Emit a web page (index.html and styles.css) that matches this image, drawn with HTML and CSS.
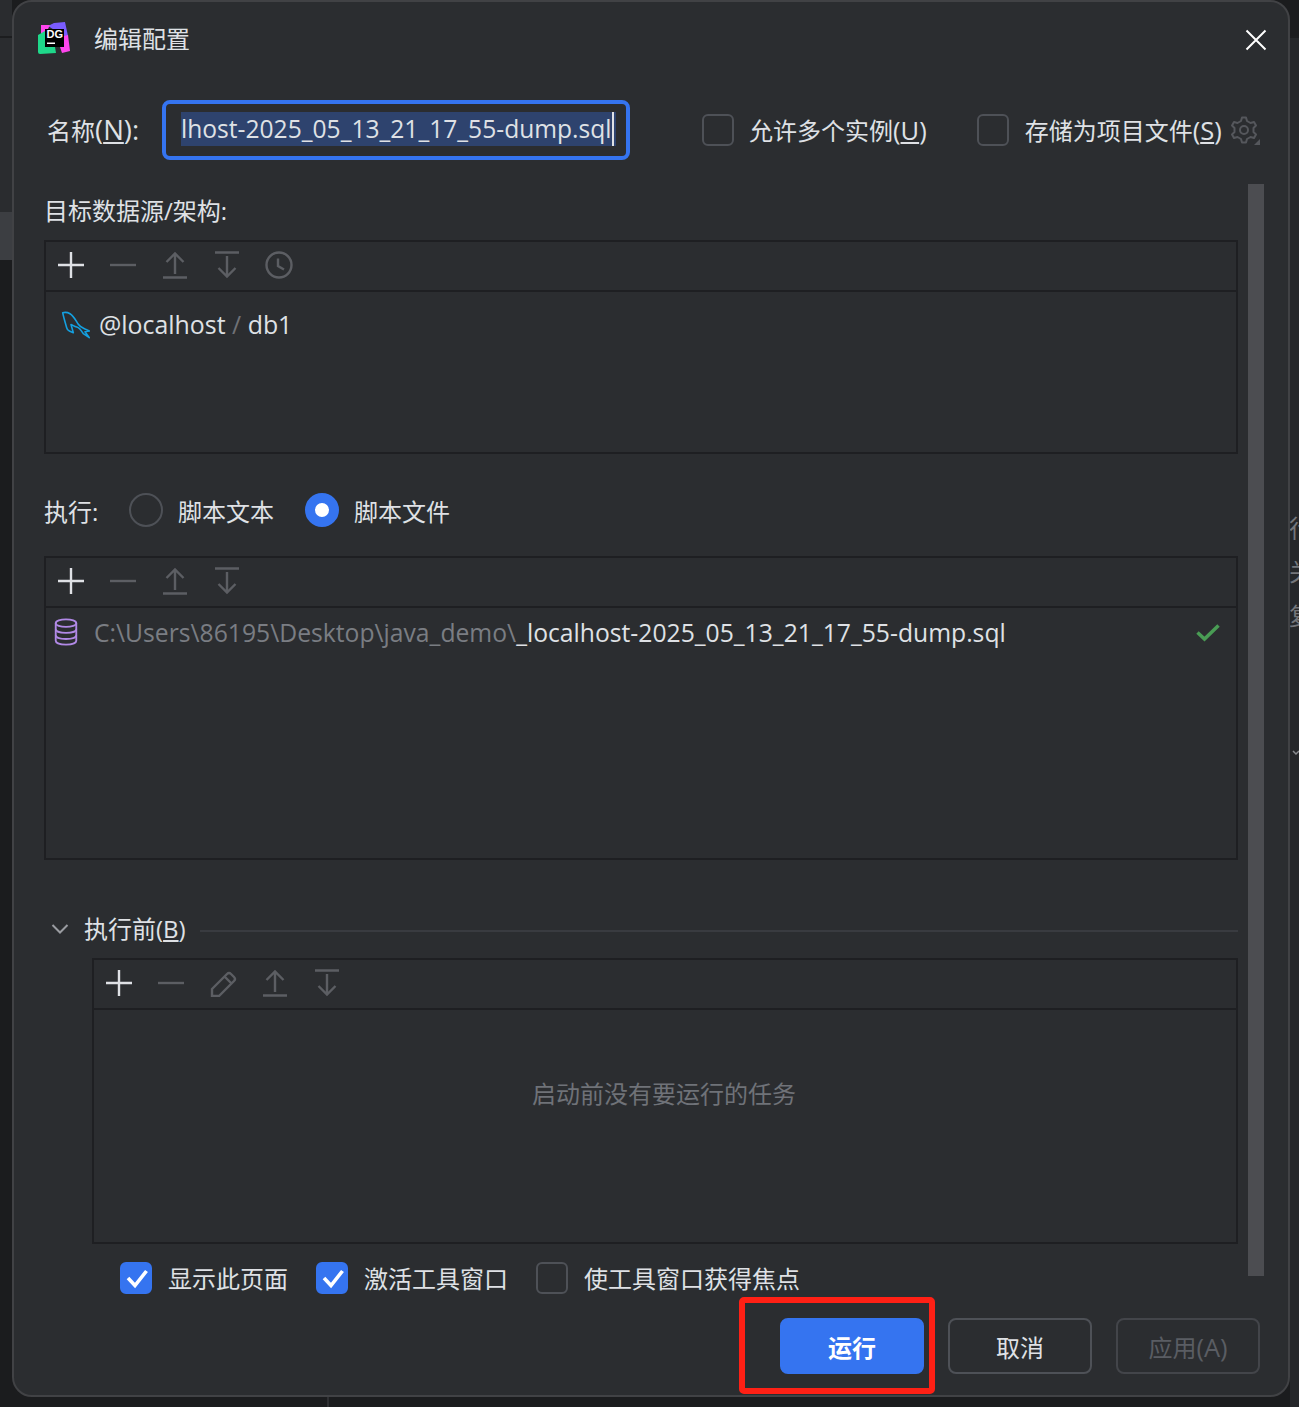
FILE: index.html
```html
<!DOCTYPE html>
<html lang="zh">
<head>
<meta charset="utf-8">
<title>编辑配置</title>
<link rel="stylesheet" href="styles.css">
</head>
<body>
<div class="backdrop-left"></div>
<div class="backdrop-patch"></div>
<div class="backdrop-line"></div>
<div class="backdrop-line second"></div>
<div class="backdrop-right"></div>
<div class="backdrop-text">
<span>行</span><span>关</span><span>复</span>
</div>
<svg class="backdrop-chev" width="8" height="6" viewBox="0 0 8 6" fill="none"><path d="M1 1 L4 4 L7 1" stroke="#8a8c90" stroke-width="1.500"/></svg>
<div class="backdrop-vline"></div>
<main class="dialog">
  <header class="titlebar">
    <svg class="app-logo" width="32" height="32" viewBox="0 0 32 32">
      <path d="M10 4 L16 1 L27 0 L30 14 L26 14 Z" fill="#7a5cff"/>
      <path d="M3 3 H12 L10 7 H7 V11 L3 13 Z M26 14 L30 13 L32 29 L24 31 L22 25 H26 Z" fill="#ff45ed"/>
      <path d="M0 13 L7 9 V25 H17 L18 31 L2 32 Q0 32 0 30 Z" fill="#1fd88a"/>
      <rect x="7" y="7" width="19" height="18" fill="#000"/>
      <text x="8.500" y="16" class="logo-text">DG</text>
      <rect x="9" y="20.500" width="8" height="1.500" fill="#fff"/>
    </svg>
    <h1 class="title">编辑配置</h1>
    <svg class="close" width="22" height="22" viewBox="0 0 22 22"><path d="M1.500 1.500 L20.500 20.500 M20.500 1.500 L1.500 20.500" stroke="#fff" stroke-width="2" fill="none"/></svg>
  </header>

  <section class="name-row">
    <label class="name-label">名称<span class="lat label-lat">(<u>N</u>):</span></label>
    <div class="name-input"><div class="name-value"><span class="selected">lhost-2025_05_13_21_17_55-dump.sql</span><i class="caret"></i></div></div>
    <div class="check-item first"><span class="box"></span><span class="check-text">允许多个实例<span class="lat">(<u>U</u>)</span></span></div>
    <div class="check-item second"><span class="box"></span><span class="check-text">存储为项目文件<span class="lat">(<u>S</u>)</span></span></div>
    <svg class="gear" width="32" height="30" viewBox="0 0 32 30" fill="none">
      <path d="M12 2.500 H16 L17 6 L20.500 8 L24 7 L26 10.500 L23.500 13 V17 L26 19.500 L24 23 L20.500 22 L17 24 L16 27.500 H12 L11 24 L7.500 22 L4 23 L2 19.500 L4.500 17 V13 L2 10.500 L4 7 L7.500 8 L11 6 Z" transform="translate(1 0)" stroke="#55575c" stroke-width="2" stroke-linejoin="round"/>
      <circle cx="15" cy="15" r="4" stroke="#55575c" stroke-width="2"/>
      <path d="M31 24 V30 H25 Z" fill="#55575c"/>
    </svg>
  </section>

  <div class="body">
    <div class="content">
      <div class="field-label">目标数据源/架构:</div>
      <section class="panel panel-source">
        <div class="toolbar">
          <svg class="tool" viewBox="0 0 28 28"><path class="on" d="M14 1 V27 M1 14 H27"/></svg>
          <svg class="tool" viewBox="0 0 28 28"><path class="off" d="M1 14 H27"/></svg>
          <svg class="tool" viewBox="0 0 28 28"><path class="off" d="M2 26.500 H26 M14 23 V3 M5.500 11 L14 2.500 L22.500 11"/></svg>
          <svg class="tool" viewBox="0 0 28 28"><path class="off" d="M2 1.500 H26 M14 5 V25 M5.500 17 L14 25.500 L22.500 17"/></svg>
          <svg class="tool" viewBox="0 0 28 28"><circle class="off" cx="14" cy="14" r="12.500"/><path class="off" d="M13 7.500 V15 L19 18.500"/></svg>
        </div>
        <div class="rows source-rows">
          <svg class="dolphin" width="30" height="30" viewBox="0 0 30 30" fill="none">
            <path d="M2.700 3.700 C6 3 8 3.500 10 4.700 C14 7 16 12 18.300 15.300 C20 18 23 19 25 20 L29.300 22 L25 22.700 L29.300 28.700 L23.300 24.700 C21 21 19 18.500 16.700 18 C14 17.500 13 16 11 15.500 L13.300 23.700 L9.300 22 C8 21.500 7 20 6.700 18.700 C5 13 3.500 8 2.700 3.700 Z" stroke="#14a0e0" stroke-width="1.600" stroke-linejoin="round"/>
          </svg>
          <span class="src-text">@localhost <span class="slash">/</span> db1</span>
        </div>
      </section>

      <section class="exec-row">
        <span class="exec-label">执行:</span>
        <span class="radio"></span><span class="radio-text">脚本文本</span>
        <span class="radio checked"></span><span class="radio-text">脚本文件</span>
      </section>

      <section class="panel panel-script">
        <div class="toolbar">
          <svg class="tool" viewBox="0 0 28 28"><path class="on" d="M14 1 V27 M1 14 H27"/></svg>
          <svg class="tool" viewBox="0 0 28 28"><path class="off" d="M1 14 H27"/></svg>
          <svg class="tool" viewBox="0 0 28 28"><path class="off" d="M2 26.500 H26 M14 23 V3 M5.500 11 L14 2.500 L22.500 11"/></svg>
          <svg class="tool" viewBox="0 0 28 28"><path class="off" d="M2 1.500 H26 M14 5 V25 M5.500 17 L14 25.500 L22.500 17"/></svg>
        </div>
        <div class="rows script-rows">
          <svg class="db" width="26" height="28" viewBox="0 0 26 30" fill="none" stroke="#b189e6" stroke-width="2">
            <ellipse cx="13" cy="5.500" rx="11" ry="4"/>
            <path d="M2 5.500 V24.500 C2 27 7 28.500 13 28.500 C19 28.500 24 27 24 24.500 V5.500"/>
            <path d="M2 12 C2 14.500 7 16 13 16 C19 16 24 14.500 24 12 M2 18.500 C2 21 7 22.500 13 22.500 C19 22.500 24 21 24 18.500"/>
          </svg>
          <span class="path"><span class="dim">C:\Users\86195\Desktop\java_demo\</span><span>_localhost-2025_05_13_21_17_55-dump.sql</span></span>
          <svg class="ok" width="26" height="20" viewBox="0 0 26 20" fill="none"><path d="M2.500 10.500 L9.500 17 L23.500 3.500" stroke="#499c54" stroke-width="3.500"/></svg>
        </div>
      </section>

      <section class="before-head">
        <svg class="chev" width="18" height="12" viewBox="0 0 18 12" fill="none"><path d="M1.500 2 L9 9.500 L16.500 2" stroke="#9a9ca1" stroke-width="2"/></svg>
        <span class="before-title">执行前(<u>B</u>)</span>
        <span class="rule"></span>
      </section>

      <section class="panel panel-before">
        <div class="toolbar">
          <svg class="tool" viewBox="0 0 28 28"><path class="on" d="M14 1 V27 M1 14 H27"/></svg>
          <svg class="tool" viewBox="0 0 28 28"><path class="off" d="M1 14 H27"/></svg>
          <svg class="tool" viewBox="0 0 28 28"><path class="off" d="M3 20 L18 5 Q20 3 22 5 L25 8 Q27 10 25 12 L10 27 H3 Z M15.500 7.500 L22.500 14.500"/></svg>
          <svg class="tool" viewBox="0 0 28 28"><path class="off" d="M2 26.500 H26 M14 23 V3 M5.500 11 L14 2.500 L22.500 11"/></svg>
          <svg class="tool" viewBox="0 0 28 28"><path class="off" d="M2 1.500 H26 M14 5 V25 M5.500 17 L14 25.500 L22.500 17"/></svg>
        </div>
        <div class="rows empty-rows">启动前没有要运行的任务</div>
      </section>

      <section class="options">
        <span class="box on"><svg width="24" height="24" viewBox="0 0 24 24" fill="none"><path d="M4 12 L11 19.500 L22.500 5" stroke="#fff" stroke-width="3.600"/></svg></span><span class="opt-text">显示此页面</span>
        <span class="box on"><svg width="24" height="24" viewBox="0 0 24 24" fill="none"><path d="M4 12 L11 19.500 L22.500 5" stroke="#fff" stroke-width="3.600"/></svg></span><span class="opt-text">激活工具窗口</span>
        <span class="box"></span><span class="opt-text">使工具窗口获得焦点</span>
      </section>
    </div>
    <div class="scrollbar"></div>
  </div>

  <footer class="footer">
    <button class="btn primary">运行</button>
    <button class="btn">取消</button>
    <button class="btn disabled">应用<span class="lat">(A)</span></button>
  </footer>
  <div class="annotation"></div>
</main>
</body>
</html>
```
FILE: styles.css
```css
* { box-sizing: border-box; }
html, body { margin: 0; height: 1407px; overflow: hidden; }
body {
  background: #1b1c1e;
  font-family: "Open Sans", "Noto Sans CJK SC", sans-serif;
  font-size: 24px;
  color: #dfe1e5;
  position: relative;
}
.backdrop-left { position: absolute; left: 0; top: 0; width: 12px; height: 212px; background: #2a2c2f; }
.backdrop-patch { position: absolute; left: 0; top: 212px; width: 12px; height: 48px; background: #3c3e42; }
.backdrop-line { position: absolute; left: 0; right: 0; top: 36px; height: 2px; background: #1c1d1f; }
.backdrop-line.second { left: 1290px; top: 106px; background: #34363a; }
.backdrop-right { position: absolute; left: 1290px; right: 0; top: 38px; height: 1369px; background: #25272a; }
.backdrop-text { position: absolute; left: 1289px; top: 513px; display: flex; flex-direction: column; gap: 16px; font-size: 24px; line-height: 28px; color: #74767b; font-family: "Noto Sans CJK SC", sans-serif; }
.backdrop-chev { position: absolute; left: 1292px; top: 750px; }
.backdrop-vline { position: absolute; left: 327px; top: 1397px; width: 2px; height: 10px; background: #2e2f32; }

.dialog {
  position: relative;
  margin-left: 12px;
  width: 1278px;
  height: 1397px;
  background: #2b2d30;
  border: 2px solid #414245;
  border-radius: 20px;
  display: flex;
  flex-direction: column;
}
.lat { font-size: 25.500px; line-height: 1; }
.lat.label-lat { font-size: 27.500px; }
.titlebar { display: flex; align-items: center; height: 74px; padding: 0 21px 0 24px; flex: none; }
.app-logo { flex: none; margin-bottom: 2px; }
.logo-text { font: 700 11px "Liberation Sans", sans-serif; fill: #fff; }
.title { margin: 0 0 0 24px; font-size: 24px; font-weight: 400; flex: 1; line-height: 1; }
.close { flex: none; margin-top: 2px; }

.name-row { display: flex; align-items: center; height: 60px; margin-top: 24px; padding-left: 33px; flex: none; }
.name-label { width: 115px; flex: none; margin-bottom: 2px; }
.name-input {
  width: 468px; height: 60px; flex: none;
  border: 4px solid #3574f0;
  border-radius: 8px;
  padding-left: 15px;
  display: flex; align-items: center;
  overflow: hidden;
}
.name-value { display: flex; align-items: center; margin-bottom: 2px; }
.selected { background: #2e436e; font-size: 24.600px; line-height: 33px; white-space: nowrap; padding: 0 4px 1px 0; }
.caret { width: 2px; height: 34px; background: #dfe1e5; margin-left: -4px; }
.box { width: 32px; height: 32px; flex: none; border: 2px solid #4e5157; border-radius: 6px; display: inline-flex; align-items: center; justify-content: center; }
.box.on { background: #3574f0; border-color: #3574f0; }
.check-item { display: flex; align-items: center; gap: 16px; flex: none; }
.check-item.first { gap: 15px; }
.check-text { margin-bottom: 2px; }
.check-item.first { margin-left: 72px; }
.check-item.second { margin-left: 50px; }
.gear { margin-left: 7px; flex: none; }

.body { display: flex; flex: none; height: 1092px; margin-top: 24px; padding-left: 30px; }
.content { width: 1194px; flex: none; display: flex; flex-direction: column; }
.scrollbar { width: 16px; margin-left: 10px; background: #4c4d51; flex: none; }
.field-label { height: 56px; line-height: 54px; flex: none; }
.panel { border: 2px solid #1e1f22; flex: none; }
.toolbar { height: 50px; border-bottom: 2px solid #1e1f22; display: flex; align-items: center; gap: 24px; padding: 0 0 2px 11px; }
.tool { width: 28px; height: 28px; fill: none; }
.tool .on { stroke: #dfe1e5; stroke-width: 2.400; }
.tool .off { stroke: #5c5e63; stroke-width: 2.400; fill: none; }
.panel-source { height: 214px; }
.source-rows { display: flex; align-items: center; height: 64px; padding-left: 14px; gap: 9px; }
.src-text { font-size: 24.900px; }
.dolphin { flex: none; }
.slash { color: #6f7176; }
.exec-row { display: flex; align-items: center; height: 102px; flex: none; padding-top: 10px; }
.exec-label { width: 85px; }
.radio { width: 34px; height: 34px; border-radius: 50%; border: 2px solid #4e5157; flex: none; }
.radio.checked { border: 10px solid #3574f0; background: #fff; }
.radio-text { margin-left: 15px; margin-right: 31px; }
.panel-script { height: 304px; }
.script-rows { display: flex; align-items: center; height: 48px; padding-left: 7px; padding-right: 15px; }
.db { flex: none; }
.path { margin-left: 15px; flex: 1; white-space: nowrap; font-size: 24.700px; }
.dim { color: #7a7d83; }
.ok { flex: none; }
.before-head { display: flex; align-items: center; height: 98px; flex: none; padding-top: 44px; }
.chev { margin: 0 0 4px 7px; flex: none; }
.before-title { margin: 0 0 8px 15px; }
.rule { flex: 1; height: 2px; background: #393b40; margin-left: 14px; }
.panel-before { height: 286px; margin-left: 48px; display: flex; flex-direction: column; }
.empty-rows { flex: 1; display: flex; align-items: center; justify-content: center; color: #6f7278; padding: 0 2px 68px 0; }
.options { display: flex; align-items: center; height: 68px; padding-left: 76px; flex: none; }
.opt-text { margin: 0 28px 2px 16px; }

.footer { display: flex; justify-content: flex-end; gap: 24px; height: 56px; margin-top: 42px; padding-right: 28px; flex: none; }
.btn {
  width: 144px; height: 56px; background: transparent;
  border: 2px solid #4e5157; border-radius: 8px;
  font: inherit; color: #dfe1e5; padding: 0;
}
.btn.primary { background: #3574f0; border-color: #3574f0; color: #fff; font-weight: 700; }
.btn.disabled { color: #5a5d63; border-color: #43454a; }
.annotation { position: absolute; left: 725px; top: 1295px; width: 196px; height: 97px; border: 6px solid #ff2015; border-radius: 5px; }
```
